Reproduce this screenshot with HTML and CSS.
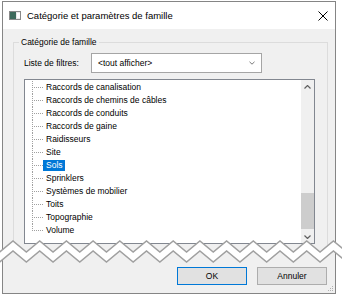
FILE: index.html
```html
<!DOCTYPE html>
<html lang="fr">
<head>
<meta charset="utf-8">
<title>Catégorie et paramètres de famille</title>
<link rel="stylesheet" href="styles.css">
</head>
<body>
<div class="window">
  <div class="titlebar">
    <svg class="appicon" width="12" height="9" viewBox="0 0 12 9">
      <rect x="0.5" y="0.5" width="11" height="8" fill="#e8e8e8" stroke="#8a8a8a"/>
      <rect x="1" y="1" width="6" height="7" fill="#3d6b5c"/>
      <rect x="8" y="2" width="3" height="5" fill="#ffffff"/>
    </svg>
    <span class="title">Catégorie et paramètres de famille</span>
    <svg class="close" width="10" height="10" viewBox="0 0 10 10">
      <path d="M0.5 0.5 L9.5 9.5 M9.5 0.5 L0.5 9.5" stroke="#000" stroke-width="1" fill="none"/>
    </svg>
  </div>
  <div class="client">
    <fieldset class="group">
      <legend class="group-title">Catégorie de famille</legend>
      <div class="filter-row">
        <span class="filter-label">Liste de filtres:</span>
        <div class="combo">
          <span class="combo-text">&lt;tout afficher&gt;</span>
          <svg class="combo-arrow" width="6" height="4" viewBox="0 0 6 4">
            <path d="M0.5 0.8 L3 3.2 L5.5 0.8" stroke="#7a7a7a" stroke-width="1" fill="none"/>
          </svg>
        </div>
      </div>
      <div class="listbox">
        <ul class="tree">
          <li class="node"><span class="conn"></span><span class="label">Raccords de canalisation</span></li>
          <li class="node"><span class="conn"></span><span class="label">Raccords de chemins de câbles</span></li>
          <li class="node"><span class="conn"></span><span class="label">Raccords de conduits</span></li>
          <li class="node"><span class="conn"></span><span class="label">Raccords de gaine</span></li>
          <li class="node"><span class="conn"></span><span class="label">Raidisseurs</span></li>
          <li class="node"><span class="conn"></span><span class="label">Site</span></li>
          <li class="node"><span class="conn"></span><span class="label selected">Sols</span></li>
          <li class="node"><span class="conn"></span><span class="label">Sprinklers</span></li>
          <li class="node"><span class="conn"></span><span class="label">Systèmes de mobilier</span></li>
          <li class="node"><span class="conn"></span><span class="label">Toits</span></li>
          <li class="node"><span class="conn"></span><span class="label">Topographie</span></li>
          <li class="node last"><span class="conn"></span><span class="label">Volume</span></li>
        </ul>
        <div class="scrollbar">
          <div class="sb-btn">
            <svg width="7" height="4" viewBox="0 0 7 4"><path d="M0.5 3.5 L3.5 0.5 L6.5 3.5" stroke="#606060" stroke-width="1.2" fill="none"/></svg>
          </div>
          <div class="sb-track"><div class="sb-thumb"></div></div>
          <div class="sb-btn">
            <svg width="7" height="4" viewBox="0 0 7 4"><path d="M0.5 0.5 L3.5 3.5 L6.5 0.5" stroke="#606060" stroke-width="1.2" fill="none"/></svg>
          </div>
        </div>
      </div>
    </fieldset>
    <div class="buttons">
      <button class="btn default">OK</button>
      <button class="btn">Annuler</button>
    </div>
    <svg class="grip" width="6" height="6" viewBox="0 0 6 6">
      <rect x="4" y="0" width="1" height="1" fill="#b0b0b0"/>
      <rect x="2" y="2" width="1" height="1" fill="#b0b0b0"/>
      <rect x="4" y="2" width="1" height="1" fill="#b0b0b0"/>
      <rect x="0" y="4" width="1" height="1" fill="#b0b0b0"/>
      <rect x="2" y="4" width="1" height="1" fill="#b0b0b0"/>
      <rect x="4" y="4" width="1" height="1" fill="#b0b0b0"/>
    </svg>
  </div>
</div>
<svg class="tear" width="342" height="30" viewBox="0 0 342 30">
  <defs>
    <clipPath id="below">
      <polygon points="-13.7,15 -0.35,26 13,15 26.35,26 39.7,15 53.05,26 66.4,15 79.75,26 93.1,15 106.45,26 119.8,15 133.15,26 146.5,15 159.85,26 173.2,15 186.55,26 199.9,15 213.25,26 226.6,15 239.95,26 253.3,15 266.65,26 280,15 293.35,26 306.7,15 320.05,26 333.4,15 346.75,26 346.75,30 -13.7,30"/>
    </clipPath>
  </defs>
  <g clip-path="url(#below)">
    <rect x="0" y="0" width="342" height="30" fill="#ffffff"/>
    <rect x="2" y="0" width="334" height="30" fill="#f0f0f0"/>
    <rect x="2" y="0" width="1" height="30" fill="#858585"/>
    <rect x="335" y="0" width="1" height="30" fill="#858585"/>
  </g>
  <polygon fill="#ffffff" points="-13.7,5 -0.35,16 13,5 26.35,16 39.7,5 53.05,16 66.4,5 79.75,16 93.1,5 106.45,16 119.8,5 133.15,16 146.5,5 159.85,16 173.2,5 186.55,16 199.9,5 213.25,16 226.6,5 239.95,16 253.3,5 266.65,16 280,5 293.35,16 306.7,5 320.05,16 333.4,5 346.75,16 346.75,26 333.4,15 320.05,26 306.7,15 293.35,26 280,15 266.65,26 253.3,15 239.95,26 226.6,15 213.25,26 199.9,15 186.55,26 173.2,15 159.85,26 146.5,15 133.15,26 119.8,15 106.45,26 93.1,15 79.75,26 66.4,15 53.05,26 39.7,15 26.35,26 13,15 -0.35,26 -13.7,15"/>
  <polyline fill="none" stroke="#a0a0a0" stroke-width="1.5" points="-13.7,5 -0.35,16 13,5 26.35,16 39.7,5 53.05,16 66.4,5 79.75,16 93.1,5 106.45,16 119.8,5 133.15,16 146.5,5 159.85,16 173.2,5 186.55,16 199.9,5 213.25,16 226.6,5 239.95,16 253.3,5 266.65,16 280,5 293.35,16 306.7,5 320.05,16 333.4,5 346.75,16"/>
  <polyline fill="none" stroke="#a0a0a0" stroke-width="1.5" points="-13.7,15 -0.35,26 13,15 26.35,26 39.7,15 53.05,26 66.4,15 79.75,26 93.1,15 106.45,26 119.8,15 133.15,26 146.5,15 159.85,26 173.2,15 186.55,26 199.9,15 213.25,26 226.6,15 239.95,26 253.3,15 266.65,26 280,15 293.35,26 306.7,15 320.05,26 333.4,15 346.75,26"/>
</svg>
</body>
</html>
```

FILE: styles.css
```css
* { box-sizing: border-box; }

html, body {
  margin: 0;
  padding: 0;
}

body {
  position: relative;
  width: 342px;
  height: 298px;
  overflow: hidden;
  background: #ffffff;
  font-family: "Liberation Sans", Arial, sans-serif;
  font-size: 8.5px;
  color: #000;
}

.window {
  margin: 1px 0 0 2px;
  width: 334px;
  height: 293px;
  border: 1px solid #858585;
  background: #f0f0f0;
  display: flex;
  flex-direction: column;
}

.titlebar {
  flex: none;
  height: 27px;
  background: #ffffff;
  display: flex;
  align-items: center;
  padding: 0 7px 0 6px;
}

.appicon { flex: none; margin-right: 6px; }

.title {
  flex: 1;
  font-size: 9.5px;
}

.close { flex: none; }

.client {
  flex: 1;
  position: relative;
  display: flex;
  flex-direction: column;
  padding: 8px 7px 8px 10px;
}

.group {
  margin: 0;
  min-width: 0;
  border: 1px solid #dcdcdc;
  padding: 5px 12px 10px 10px;
}

.group-title {
  padding: 0 2px;
  margin-left: -5px;
  line-height: 11px;
  font-size: 8.5px;
}

.filter-row {
  display: flex;
  align-items: center;
  height: 20px;
}

.filter-label {
  width: 67px;
  flex: none;
}

.combo {
  width: 171px;
  height: 20px;
  border: 1px solid #a5a5a5;
  background: #ffffff;
  display: flex;
  align-items: center;
  padding: 0 6px 0 6px;
}

.combo-text { flex: 1; }

.listbox {
  margin-top: 6px;
  width: 291px;
  height: 165px;
  border: 1px solid #828790;
  background: #ffffff;
  display: flex;
}

.tree {
  flex: 1;
  list-style: none;
  margin: 0;
  padding: 1px 0 0 0;
}

.node {
  height: 13px;
  display: flex;
  align-items: center;
  white-space: nowrap;
}

.conn {
  flex: none;
  align-self: stretch;
  width: 11px;
  margin-left: 7px;
  background:
    repeating-linear-gradient(to bottom, #a0a0a0 0 1px, transparent 1px 2px) 0 0 / 1px 100% no-repeat,
    repeating-linear-gradient(to right, #a0a0a0 0 1px, transparent 1px 2px) 2px 6px / 9px 1px no-repeat;
}

.node.last .conn {
  background:
    repeating-linear-gradient(to bottom, #a0a0a0 0 1px, transparent 1px 2px) 0 0 / 1px 7px no-repeat,
    repeating-linear-gradient(to right, #a0a0a0 0 1px, transparent 1px 2px) 2px 6px / 9px 1px no-repeat;
}

.label {
  line-height: 11px;
  padding: 0 2px 0 3px;
}

.label.selected {
  background: #0078d7;
  color: #ffffff;
}

.scrollbar {
  flex: none;
  width: 13px;
  background: #f0f0f0;
  display: flex;
  flex-direction: column;
}

.sb-btn {
  flex: none;
  height: 13px;
  display: flex;
  align-items: center;
  justify-content: center;
}

.sb-track {
  flex: 1;
  padding-top: 100px;
}

.sb-thumb {
  height: 36px;
  background: #cdcdcd;
}

.buttons {
  margin-top: auto;
  margin-right: 1px;
  display: flex;
  justify-content: flex-end;
  gap: 10px;
}

.btn {
  width: 70px;
  height: 18px;
  padding: 0;
  border: 1px solid #adadad;
  background: #e1e1e1;
  font-family: "Liberation Sans", Arial, sans-serif;
  font-size: 8.5px;
  color: #000;
}

.btn.default {
  border-color: #0078d7;
}

.grip {
  position: absolute;
  right: 1px;
  bottom: 1px;
}

.tear {
  position: absolute;
  left: 0;
  top: 236px;
}
```
